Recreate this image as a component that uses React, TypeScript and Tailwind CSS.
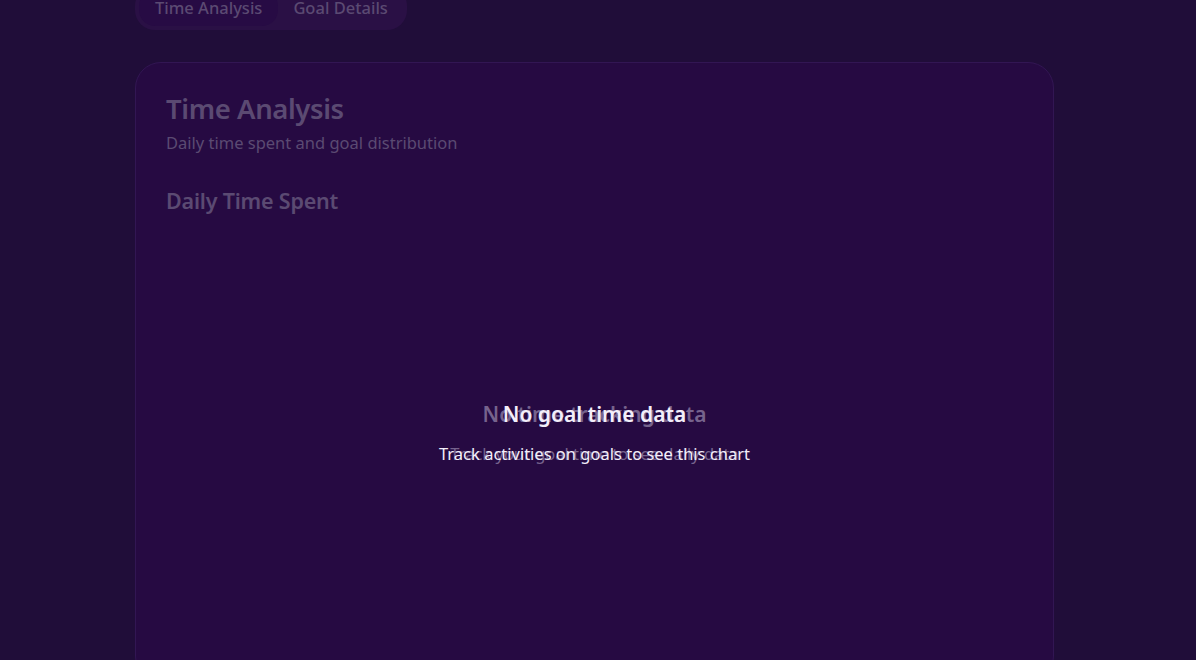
const App = () => {
  return (
    <div
      className="h-[660px] overflow-hidden bg-[#200d39] text-white"
      style={{ fontFamily: '"Noto Sans", "Open Sans", sans-serif' }}
    >
      <div className="w-[919px] ml-[135px] -mt-[14px]">
        {/** Tabs **/}
        <div className="inline-flex items-center h-[44px] p-[4px] rounded-[20px] bg-[#2a1045]">
          <button className="h-full px-[16px] rounded-[16px] bg-[#270b44] text-[16.5px] font-medium text-[#5b4a72]">
            Time Analysis
          </button>
          <button className="h-full px-[15px] rounded-[16px] text-[16.5px] font-medium text-[#5b4a72]">
            Goal Details
          </button>
        </div>

        {/** Card **/}
        <div className="relative mt-[32px] h-[620px] rounded-[26px] border border-[#321653] bg-[#260a42] px-[30px] pt-[26px]">
          <h2 className="text-[27.5px] font-semibold leading-[40px] text-[#5b4a72] tracking-[-0.4px]">
            Time Analysis
          </h2>
          <p className="mt-[1px] text-[16.5px] leading-[26px] text-[#5b4a72]">
            Daily time spent and goal distribution
          </p>
          <h3 className="mt-[30px] text-[21.5px] font-semibold leading-[30px] text-[#5b4a72] tracking-[-0.2px]">
            Daily Time Spent
          </h3>

          {/** Empty states (two stacked while switching) **/}
          <div className="absolute left-0 right-0 top-[335px] flex flex-col items-center text-[#8a7aa0] opacity-80">
            <p className="text-[21px] font-semibold leading-[32px]">No time tracking data</p>
            <p className="mt-[12px] text-[16.5px] leading-[24px]">Track your goal time to see daily data</p>
          </div>
          <div className="absolute left-0 right-0 top-[335px] flex flex-col items-center text-[#f3eefa]">
            <p className="text-[21px] font-semibold leading-[32px]">No goal time data</p>
            <p className="mt-[12px] text-[16.5px] leading-[24px]">Track activities on goals to see this chart</p>
          </div>
        </div>
      </div>
    </div>
  );
};

export default App;
